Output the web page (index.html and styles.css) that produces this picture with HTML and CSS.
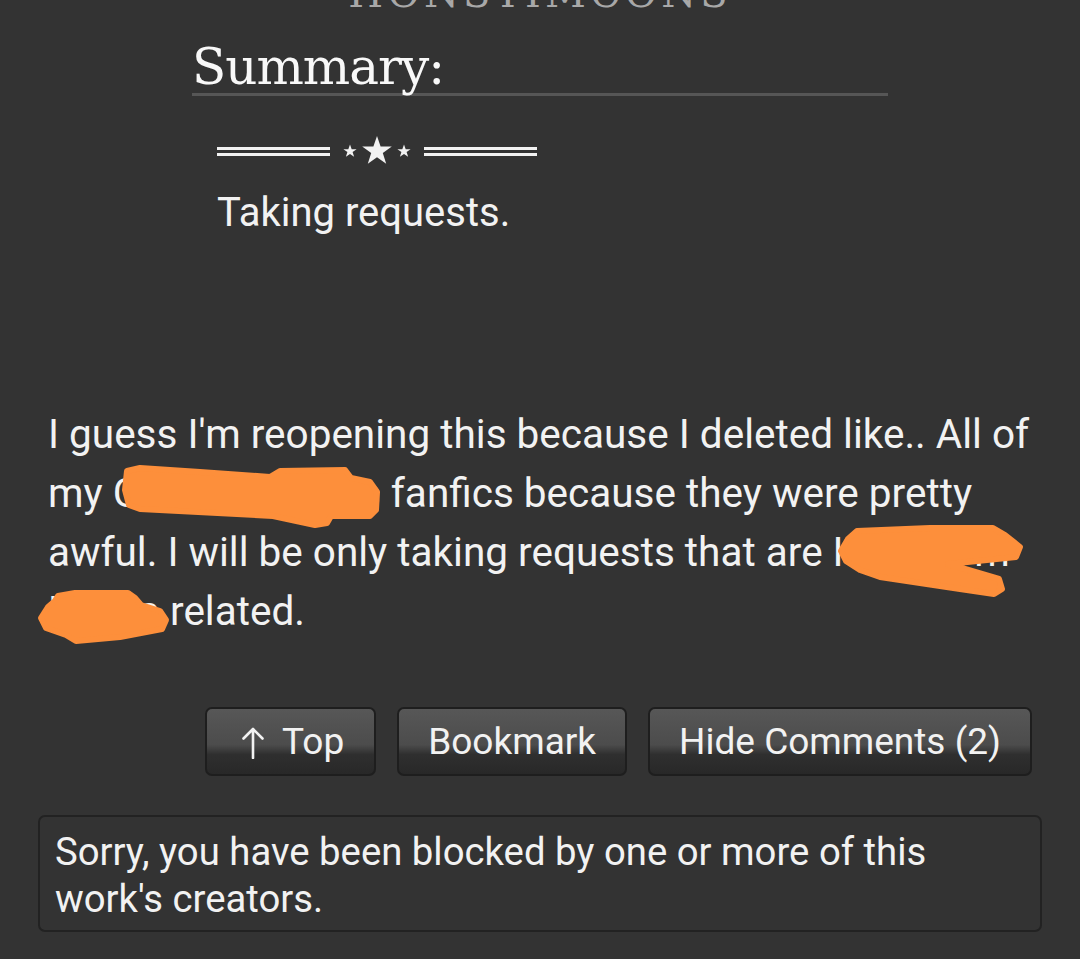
FILE: index.html
```html
<!DOCTYPE html>
<html>
<head>
<meta charset="utf-8">
<link rel="stylesheet" href="styles.css">
</head>
<body>
<div class="page">
  <h2 class="work-title">HONSTIMCONS</h2>
  <div class="summary">
    <h3 class="heading">Summary:</h3>
    <div class="userstuff">
      <div class="divider">
        <span class="dline"></span>
        <svg class="stars" width="68" height="34" viewBox="0 0 68 34">
          <polygon fill="#f2f2f2" points="7,10.5 8.7,15.2 13.6,15.2 9.6,18.1 11.1,22.8 7,19.9 2.9,22.8 4.4,18.1 0.4,15.2 5.3,15.2"/>
          <polygon fill="#f2f2f2" points="34,2 37.6,12.5 48.8,12.5 39.8,19.1 43.2,29.8 34,23.2 24.8,29.8 28.2,19.1 19.2,12.5 30.4,12.5"/>
          <polygon fill="#f2f2f2" points="61,10.5 62.7,15.2 67.6,15.2 63.6,18.1 65.1,22.8 61,19.9 56.9,22.8 58.4,18.1 54.4,15.2 59.3,15.2"/>
        </svg>
        <span class="dline"></span>
      </div>
      <p class="summary-text">Taking requests.</p>
    </div>
  </div>

  <div class="notes">
    <p class="note-text">I guess I'm reopening this because I deleted like.. All of my <span class="masked m1"><span>G</span><span>s</span></span> fanfics because they were pretty awful. I will be only taking requests that are <span class="masked m2"><span>H</span><span>m</span></span> <span class="masked m3"><span>H</span><span>a</span></span> related.</p>
  </div>

  <div class="actions">
    <a class="btn btn-top"><svg class="arrow" width="24" height="32" viewBox="0 0 24 32"><path d="M12 2 V31 M2.5 11.5 L12 2 L21.5 11.5" fill="none" stroke="#f2f2f2" stroke-width="2.6" stroke-linecap="round" stroke-linejoin="round"/></svg><span>Top</span></a>
    <a class="btn">Bookmark</a>
    <a class="btn">Hide Comments (2)</a>
  </div>

  <div class="notice">Sorry, you have been blocked by one or more of this work's creators.</div>

  <svg class="redactions" width="1080" height="959" viewBox="0 0 1080 959">
    <g fill="#fd8f3b" stroke="#fd8f3b" stroke-width="6" stroke-linejoin="round">
      <polygon points="127,471 140,468 200,472 270,477 280,471 345,470 351,478 370,482 377,492 376,510 370,516 331,516 327,523 315,525 273,516 140,509 129,505 125,490"/>
      <polygon points="857,531 930,528 993,528 1005,535 1020,547 1016,557 948,564 999,579 1002,589 994,594 960,589 880,577 860,570 846,561 841,551 848,539"/>
      <polygon points="58,596 75,593 128,593 135,598 141,605 160,611 166,620 162,629 120,637 76,641 66,635 46,628 41,618 48,607 55,601"/>
    </g>
  </svg>
</div>
</body>
</html>
```

FILE: styles.css
```css
html, body {
  margin: 0;
  padding: 0;
  background: #333333;
}
body {
  font-family: Roboto, "Noto Sans", sans-serif;
  color: #f2f2f2;
  width: 1080px;
  height: 959px;
  overflow: hidden;
}
.page {
  position: relative;
  display: flex;
  flex-direction: column;
  height: 959px;
}
.work-title {
  margin: -27px 0 0 0;
  text-align: center;
  font-family: "DejaVu Serif", serif;
  font-weight: normal;
  font-size: 40px;
  line-height: 40px;
  color: #a8a8a8;
  letter-spacing: 4px;
}
.summary {
  margin: 29px 0 0 192px;
  width: 696px;
}
.heading {
  margin: 0;
  font-family: "DejaVu Serif", serif;
  font-weight: normal;
  font-size: 50px;
  line-height: 51px;
  letter-spacing: -1px;
  color: #f8f8f8;
  border-bottom: 3px solid #565656;
}
.userstuff {
  padding-left: 25px;
  margin-top: 38px;
}
.divider {
  display: flex;
  align-items: center;
  gap: 13px;
}
.dline {
  display: block;
  width: 113px;
  height: 3px;
  border-top: 3px solid #f2f2f2;
  border-bottom: 3px solid #f2f2f2;
}
.stars {
  display: block;
}
.summary-text {
  margin: 21px 0 0 0;
  font-size: 40px;
  line-height: 48px;
}
.notes {
  margin: 168px 0 0 48px;
  width: 996px;
}
.note-text {
  margin: 0;
  font-size: 40.5px;
  line-height: 59px;
}
.masked {
  display: inline-flex;
  justify-content: space-between;
  vertical-align: baseline;
}
.m1 { width: 268px; }
.m2 { width: 177px; }
.m3 { width: 112px; }
.actions {
  display: flex;
  justify-content: flex-end;
  gap: 21px;
  margin: 66px 48px 0 0;
}
.btn {
  display: block;
  height: 65px;
  line-height: 65px;
  padding: 0 29px;
  font-size: 37px;
  color: #f2f2f2;
  border: 2px solid #1e1e1e;
  border-radius: 7px;
  background: linear-gradient(#575757 0%, #4c4c4c 55%, #2f2f2f 70%, #282828 100%);
}
.btn-top {
  display: flex;
  align-items: center;
  gap: 17px;
  padding: 0 30px 0 34px;
}
.arrow {
  display: block;
  margin-top: 2px;
}
.notice {
  margin: 39px 38px 0 38px;
  border: 2px solid #222222;
  border-radius: 7px;
  padding: 11px 16px 8px 15px;
  font-size: 38.3px;
  line-height: 47px;
  color: #f2f2f2;
}
.redactions {
  position: absolute;
  left: 0;
  top: 0;
  pointer-events: none;
}
```
